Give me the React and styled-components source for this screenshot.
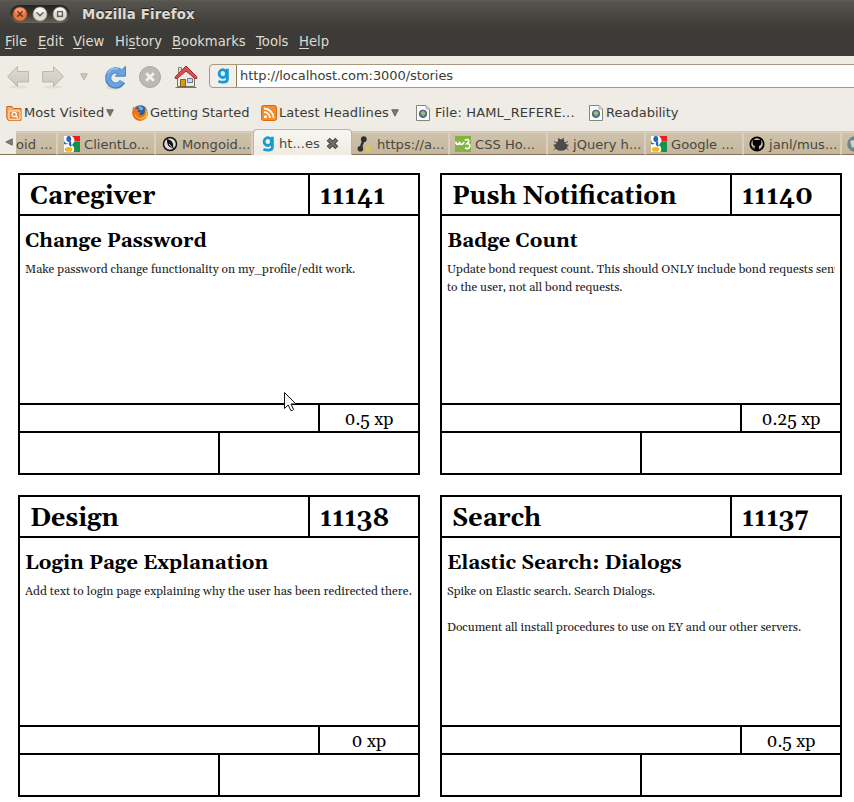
import React from 'react';
import styled, { createGlobalStyle } from 'styled-components';

const GlobalStyle = createGlobalStyle`
  * { box-sizing: border-box; }
  body { margin: 0; background: #fff; overflow: hidden; }
`;

const Window = styled.div`
  width: 854px;
  height: 802px;
  overflow: hidden;
  font: 13.3px/16px "DejaVu Sans", sans-serif;
  color: #3c3b37;
`;

const DarkChrome = styled.header`
  height: 56px;
  background: linear-gradient(#5f5b4e 0, #55544e 2px, #3f3e39 24px, #3c3b37 30px);
  color: #dfdbd2;
`;

const TitleBar = styled.div`
  height: 28px;
  display: flex;
  align-items: center;
  padding-left: 10px;
`;

const WindowButtons = styled.div`
  width: 60px;
  height: 18px;
  margin-right: 12px;
  display: flex;
  align-items: center;
  justify-content: space-between;
  padding: 0 2px;
  border-radius: 9px;
  background: linear-gradient(#24231f, #34332e 45%, #66645c);
`;

const WindowTitle = styled.h1`
  margin: 0;
  padding-top: 2px;
  font-size: 13.3px;
  line-height: 16px;
  letter-spacing: 0.18px;
  text-shadow: 0 -1px 0 #22211e;
`;

const MenuBar = styled.nav`
  display: flex;
  padding: 6px 0 0 5px;
  font-size: 13.2px;
`;

const MenuItem = styled.span`
  width: ${(p) => p.$width}px;
  white-space: nowrap;
`;

const Key = styled.span`
  text-decoration: underline;
  text-underline-offset: 2px;
  text-decoration-thickness: 1px;
`;

const NavBar = styled.div`
  height: 41px;
  background: #efebe5;
  display: flex;
  align-items: center;
  padding-left: 6px;
`;

const NavIcon = styled.span`
  width: ${(p) => p.$width}px;
  height: 26px;
  display: flex;
  align-items: center;
  flex: none;
`;

const AddressBar = styled.div`
  flex: 1;
  height: 24px;
  display: flex;
  align-items: center;
  margin: -1px -6px 0 0;
  padding-left: 7px;
  border: 1px solid #a89880;
  border-radius: 4px;
  background: linear-gradient(90deg, #f3f0eb 27px, #fff 27px);
  font-size: 13px;
  letter-spacing: -0.075px;
  color: #3c3b37;
`;

const SiteIcon = styled.span`
  width: 20px;
  height: 22px;
  margin-right: 3px;
  border-right: 1px solid #8d7c62;
  display: flex;
  align-items: center;
`;

const BookmarksBar = styled.div`
  height: 32px;
  background: #efebe5;
  display: flex;
  align-items: center;
`;

const Bookmark = styled.span`
  width: ${(p) => p.$width}px;
  display: flex;
  align-items: center;
  gap: ${(p) => p.$gap}px;
  white-space: nowrap;
  font-size: 13px;
  letter-spacing: ${(p) => p.$tracking || 0}px;

  &:first-child { margin-left: 6px; }
`;

const TabBar = styled.div`
  height: 26px;
  display: flex;
  align-items: flex-end;
  background: linear-gradient(#efebe5 2px, #d5c9b5 2px, #c6b89e 25px, #85745b 25px);
`;

const ScrollButton = styled.span`
  width: 16px;
  height: 25px;
  flex: none;
  margin-bottom: 1px;
  padding: 9px 0 0 5px;
  display: flex;
  background: #efebe5;
`;

const Tab = styled.div`
  width: ${(p) => p.$width}px;
  height: ${(p) => (p.$active ? 26 : 23)}px;
  flex: none;
  display: flex;
  align-items: center;
  gap: 4px;
  padding: ${(p) => (p.$active ? '2px 0 0 8px' : `1px 0 0 ${p.$inset ?? 6}px`)};
  overflow: hidden;
  white-space: nowrap;
  font-size: 13.1px;
  color: #494740;
  border: solid ${(p) => (p.$active ? '#c3b59d' : '#dacfbe')};
  border-width: ${(p) => (p.$active ? '1px 1px 0' : '1px 2px 0 0')};
  border-radius: ${(p) => (p.$active ? '4px 4px 0 0' : '0')};
  background: ${(p) => (p.$active ? 'linear-gradient(#f8f6f2, #efebe2)' : 'linear-gradient(#cfc2ac, #c5b79c)')};
  ${(p) => !p.$active && 'border-bottom: 1px solid #85745b;'}
`;

const TabLabel = styled.span`
  padding-top: ${(p) => (p.$active ? 0 : 1)}px;
  margin-right: ${(p) => (p.$active ? 2 : 0)}px;
`;

const Board = styled.main`
  display: grid;
  grid-template-columns: 402px 402px;
  gap: 20px;
  padding: 18px 0 0 18px;
  font-family: Georgia, Gelasio, "Liberation Serif", serif;
  color: #000;
`;

const Card = styled.article`
  height: 302px;
  display: grid;
  grid-template: 39px 187px 26px 40px / minmax(0, 1fr);
  gap: 2px;
  border: 2px solid #000;
  background: #000;
`;

const CardRow = styled.div`
  display: grid;
  grid-template: minmax(0, 1fr) / ${(p) => p.$first}px minmax(0, 1fr);
  gap: 2px;
`;

const HeadCell = styled.h2`
  margin: 0;
  padding: 1px 10px 0;
  overflow: hidden;
  background: #fff;
  font-size: 25.1px;
  line-height: 42px;
  white-space: nowrap;
`;

const CardBody = styled.div`
  padding: 11px 5px 0;
  overflow: hidden;
  background: #fff;
`;

const StoryTitle = styled.h3`
  margin: 0 0 6px;
  font-size: 20px;
  line-height: 28px;
`;

const StoryLine = styled.p`
  margin: 0;
  height: 18px;
  overflow: hidden;
  white-space: nowrap;
  font-size: 12px;
  line-height: 18px;
  letter-spacing: ${(p) => p.$tracking || 0}px;
  color: #222;
`;

const Cell = styled.div`
  padding-top: 1px;
  overflow: hidden;
  background: #fff;
  text-align: center;
  font-size: 18px;
  line-height: 28px;
`;

const Pointer = styled.svg`
  position: absolute;
  left: 283px;
  top: 391px;
`;

function WinButton({ kind }) {
  const orange = kind === 'close';
  return (
    <svg width="16" height="16" viewBox="0 0 16 16">
      <circle cx="8" cy="8" r="7" fill={orange ? '#ed7442' : '#dedbd3'} stroke={orange ? '#a84722' : '#96938b'} strokeWidth=".6" />
      <ellipse cx="8" cy="5" rx="5" ry="3.2" fill={orange ? '#f79a72' : '#f8f7f4'} />
      <g fill="none" stroke={orange ? '#6b3420' : '#64625b'} strokeWidth="1.5">
        {kind === 'close' && <path d="M5.3 5.3l5.4 5.4M10.7 5.3l-5.4 5.4" />}
        {kind === 'min' && <path d="M4.5 6.3L8 9.6l3.5-3.3" />}
        {kind === 'max' && <rect x="5.6" y="5.6" width="4.8" height="4.8" />}
      </g>
    </svg>
  );
}

const Arrow = ({ flip }) => (
  <svg width="24" height="26" viewBox="0 0 24 26">
    <defs>
      <linearGradient id="arrow" x2="0" y2="1"><stop stopColor="#e0dcd4" /><stop offset="1" stopColor="#cbc6bd" /></linearGradient>
    </defs>
    <ellipse cx="12" cy="23" rx="9" ry="1.5" fill="#e2ddd5" />
    <path d="M1.5 12.5L11.5 2.5V7.5H22.5V18H11.5V22.5Z" fill="url(#arrow)" stroke="#bdb8ae" transform={flip ? 'translate(24 0) scale(-1 1)' : undefined} />
  </svg>
);

const Triangle = ({ light }) => (
  <svg width="8" height="8" viewBox="0 0 8 8"><path d="M.7.7H7.3L4 7.2Z" fill={light ? '#cec5b4' : '#77756f'} stroke={light ? '#b7ae9b' : '#5c5a55'} strokeWidth=".8" /></svg>
);

const Reload = () => (
  <svg width="24" height="26" viewBox="0 0 24 26">
    <ellipse cx="11" cy="23.5" rx="8" ry="2" fill="#ddd9d2" />
    <path d="M19.4 17.6A7.6 7.6 0 1 1 16.9 7.6" fill="none" stroke="#4681c0" strokeWidth="6.2" />
    <path d="M22.4 2.4V12.2H12.4L15.6 8.8L18 6.6Z" fill="#6aa5df" stroke="#4681c0" />
    <path d="M19 17.4A7.4 7.4 0 1 1 17.4 8" fill="none" stroke="#69a3dd" strokeWidth="4.4" />
    <path d="M4.4 9.5Q8.5 2.8 15 5" fill="none" stroke="#93c0ea" strokeWidth="1.4" />
  </svg>
);

const Stop = () => (
  <svg width="24" height="26" viewBox="0 0 24 26">
    <circle cx="12" cy="13" r="10.5" fill="#bcb9b4" stroke="#aaa7a1" />
    <path d="M8.2 9.2l7.6 7.6M15.8 9.2l-7.6 7.6" stroke="#f4f1ec" strokeWidth="2.8" />
  </svg>
);

const Home = () => (
  <svg width="24" height="26" viewBox="0 0 24 26">
    <path d="M4.5 3.5H7.5V9H4.5Z" fill="#d8d3c9" stroke="#8a857b" />
    <path d="M3.5 12L12 5L20.5 12V22.5H3.5Z" fill="#eee9df" stroke="#77736b" />
    <path d="M1.5 23.5H22.5" stroke="#77736b" />
    <path d="M1.2 12.8L12 2L22.8 12.8V14.5H20.8L12 7L3.2 14.5H1.2Z" fill="#dc4e52" stroke="#a92830" />
    <path d="M6.5 15.5H11.5V22.5H6.5Z" fill="#d59b20" stroke="#86601e" />
    <path d="M13.5 14.5H18.5V18.5H13.5Z" fill="#c8daed" stroke="#647b93" />
  </svg>
);

const GIcon = () => (
  <svg width="13" height="16" viewBox="0 0 13 16" fill="none" stroke="#159bd5" strokeWidth="2.8">
    <ellipse cx="5.8" cy="5.6" rx="3.7" ry="3.9" />
    <path d="M10.4.8V11Q10.4 14.2 6 14.2Q3.5 14.2 1.4 13.2" />
  </svg>
);

const FolderIcon = () => (
  <svg width="16" height="16" viewBox="0 0 16 16">
    <path d="M.8 1.5H6L7.5 3.5H15V15.2H2.2L.8 13Z" fill="#f3ae70" stroke="#cc600f" />
    <path d="M3 6H14V14.3H3Z" fill="#e98b3d" stroke="#ffe8d0" />
    <circle cx="8.2" cy="9.5" r="2.2" fill="none" stroke="#fff" strokeWidth="1.2" />
    <path d="M10 11.2L12 13" stroke="#fff" strokeWidth="1.4" />
  </svg>
);

const FirefoxIcon = () => (
  <svg width="16" height="16" viewBox="0 0 16 16">
    <circle cx="8" cy="8" r="7.7" fill="#d96014" />
    <circle cx="9" cy="6" r="5.6" fill="#2a5f9f" />
    <path d="M6 1.5Q9 .5 11.5 3L10 5.5L8 5Z" fill="#78b0dc" />
    <path d="M1 1.8L3.6 3.8L6.8 4.5L5.2 6.8L8.6 7.6Q6.5 8.6 8 10.2Q11 11 12.6 8L13 2.6Q17 7.2 14.8 11.5Q11.5 16.2 6.4 15.4Q.2 13.2.4 7Z" fill="#ee7418" />
    <path d="M3 8Q4 13 8.5 13Q13 12.5 13.8 8Q14 5 13 2.6Q17 7.2 14.5 11.7Q8.5 17.5 2.5 12.5Z" fill="#fcb52c" />
    <path d="M2 10Q5 14.8 9 14Q5 16 2.5 12.6Z" fill="#e6500f" />
  </svg>
);

const FeedIcon = () => (
  <svg width="16" height="16" viewBox="0 0 16 16">
    <rect x=".5" y=".5" width="15" height="15" rx="2" fill="#f68b27" stroke="#d76b11" />
    <g fill="none" stroke="#fff" strokeWidth="1.8"><path d="M3 7.1A6 6 0 0 1 9 13.1M3 3.5A9.6 9.6 0 0 1 12.6 13.1" /></g>
    <circle cx="4.4" cy="11.7" r="1.5" fill="#fff" />
  </svg>
);

const PageIcon = () => (
  <svg width="14" height="16" viewBox="0 0 14 16">
    <path d="M.5.5H10L13.5 4V15.5H.5Z" fill="#fbfbfa" stroke="#85857f" />
    <path d="M10 .5V4H13.5" fill="#ddd" stroke="#aaa" />
    <circle cx="7" cy="8.8" r="3.7" fill="#4e7eae" stroke="#45596e" />
    <path d="M4.6 7.2L7.4 5.8L9.4 8L7.8 11L5.6 9.6Z" fill="#a9bd66" />
  </svg>
);

const GoogleIcon = () => (
  <svg width="16" height="16" viewBox="0 0 16 16">
    <path fill="#fff" d="M0 0H16V16H0Z" />
    <path fill="#eb1e24" d="M8 0H16V5.5H10.5Q11 2.5 8 0Z" />
    <path fill="#12924c" d="M10.5 5.5H16V16H9.5Q11.5 12 8 9Z" />
    <path fill="#2564bd" d="M0 4V8Q2.2 9 4 7.6Q0 7 0 4Z" />
    <ellipse cx="4.8" cy="3" rx="2.4" ry="3" fill="#2564bd" />
    <path d="M7 6Q4.5 7.5 7.3 10" fill="none" stroke="#2564bd" strokeWidth="2.2" />
    <ellipse cx="4.6" cy="13.4" rx="3.8" ry="2.3" fill="#f5b51d" />
  </svg>
);

const LeafIcon = () => (
  <svg width="16" height="16" viewBox="0 0 16 16">
    <circle cx="8" cy="8" r="6.5" fill="#dcdcdc" stroke="#111" strokeWidth="1.5" />
    <path d="M5 3Q12 4.5 11.2 11L12.5 13.5L9.6 11.8Q4.4 10.5 5 3Z" fill="#111" />
    <path d="M7.2 8L10 11.5" stroke="#eee" strokeWidth=".8" />
  </svg>
);

const DotsIcon = () => (
  <svg width="16" height="16" viewBox="0 0 16 16">
    <path d="M6.5 4L3.5 12.5" stroke="#302f31" strokeWidth="2.4" />
    <circle cx="6.8" cy="3.2" r="2.9" fill="#302f31" /><circle cx="3.4" cy="12.8" r="2.8" fill="#302f31" /><circle cx="11" cy="12.8" r="2.9" fill="#e0c64f" />
  </svg>
);

const W3Icon = () => (
  <svg width="16" height="16" viewBox="0 0 16 16">
    <path fill="#83b443" d="M0 0H16V16H0Z" />
    <path d="M.8 5.6Q.9 8.4 2.8 8.4Q4.4 8.4 4.4 5.6Q4.6 8.4 6.4 8.4Q8.4 8.4 9 5.9M9.8 4.6Q11.2 3 13 3.7Q15 5.2 12 7.6Q15.4 7.6 14.8 10.8Q13.3 13.6 10 12" fill="none" stroke="#fff" strokeWidth="1.6" />
  </svg>
);

const InsectIcon = () => (
  <svg width="16" height="16" viewBox="0 0 16 16">
    <path d="M4.5 6L5.6 1.5L7 3.2H9L10.4 1.5L11.5 6L15 10L13 13.2Q8 16.4 3 13.2L1 10Z" fill="#4c4b49" />
    <path d="M5 7L1 5.5M11 7L15 5.5M3 12L.6 14M13 12L15.4 14M3 9H.4M13 9H15.6" stroke="#4c4b49" />
    <path d="M2.5 4.5L4 5.8M13.5 4.5L12 5.8M2.2 13L3.5 14.4M13.8 13L12.5 14.4" stroke="#eee" strokeWidth=".7" />
  </svg>
);

const CatIcon = () => (
  <svg width="16" height="16" viewBox="0 0 16 16">
    <circle cx="8" cy="8" r="6.7" fill="#c9bda8" stroke="#000" strokeWidth="1.8" />
    <path d="M4 3L6 4H10L12 3L12.4 7Q12 10 9.9 10.3L10 14H6V10.3Q3.8 10 3.6 7ZM3 10L6 12V13.2Z" />
  </svg>
);

const GlobeIcon = () => (
  <svg width="16" height="16" viewBox="0 0 16 16">
    <circle cx="8" cy="8" r="7" fill="#5b8e9d" stroke="#7e8178" strokeWidth="1.5" /><path d="M3 5L7 4L8 10L5 12Z" fill="#c5d9cb" />
  </svg>
);

const CloseIcon = () => (
  <svg width="13" height="13" viewBox="0 0 13 13">
    <path d="M2.2 2.2L10.8 10.8M10.8 2.2L2.2 10.8" stroke="#3f3e3b" strokeWidth="4.4" />
    <path d="M2.5 2.5L10.5 10.5M10.5 2.5L2.5 10.5" stroke="#6f6d68" strokeWidth="2.8" />
  </svg>
);

const menus = [
  ['', 'F', 'ile', 33], ['', 'E', 'dit', 35], ['', 'V', 'iew', 42], ['Hi', 's', 'tory', 57],
  ['', 'B', 'ookmarks', 84], ['', 'T', 'ools', 43], ['', 'H', 'elp', 40],
];

const tabs = [
  { text: 'oid ...', width: 42, inset: 0 },
  { text: 'ClientLo...', width: 98, Icon: GoogleIcon },
  { text: 'Mongoid...', width: 97, Icon: LeafIcon },
  { text: 'ht...es', width: 99, Icon: GIcon, active: true },
  { text: 'https://a...', width: 98, Icon: DotsIcon, inset: 5 },
  { text: 'CSS Ho...', width: 98, Icon: W3Icon, inset: 5 },
  { text: 'jQuery h...', width: 98, Icon: InsectIcon, inset: 5 },
  { text: 'Google ...', width: 98, Icon: GoogleIcon, inset: 5 },
  { text: 'janl/mus...', width: 98, Icon: CatIcon, inset: 5 },
  { text: '', width: 98, Icon: GlobeIcon, inset: 5 },
];

const stories = [
  { area: 'Caregiver', id: '11141', title: 'Change Password', xp: '0.5 xp', lines: [['Make password change functionality on my_profile/edit work.']] },
  { area: 'Push Notification', id: '11140', title: 'Badge Count', xp: '0.25 xp', lines: [['Update bond request count. This should ONLY include bond requests sent', -0.02], ['to the user, not all bond requests.', -0.03]] },
  { area: 'Design', id: '11138', title: 'Login Page Explanation', xp: '0 xp', lines: [['Add text to login page explaining why the user has been redirected there.', 0.035]] },
  { area: 'Search', id: '11137', title: 'Elastic Search: Dialogs', xp: '0.5 xp', lines: [['Spike on Elastic search. Search Dialogs.', -0.03], [''], ['Document all install procedures to use on EY and our other servers.', -0.045]] },
];

function StoryCard({ story }) {
  return (
    <Card>
      <CardRow $first={288}>
        <HeadCell>{story.area}</HeadCell>
        <HeadCell>{story.id}</HeadCell>
      </CardRow>
      <CardBody>
        <StoryTitle>{story.title}</StoryTitle>
        {story.lines.map(([line, tracking], i) => <StoryLine key={i} $tracking={tracking}>{line}</StoryLine>)}
      </CardBody>
      <CardRow $first={298}>
        <Cell />
        <Cell>{story.xp}</Cell>
      </CardRow>
      <CardRow $first={198}>
        <Cell />
        <Cell />
      </CardRow>
    </Card>
  );
}

export default function App() {
  return (
    <Window>
      <GlobalStyle />
      <DarkChrome>
        <TitleBar>
          <WindowButtons><WinButton kind="close" /><WinButton kind="min" /><WinButton kind="max" /></WindowButtons>
          <WindowTitle>Mozilla Firefox</WindowTitle>
        </TitleBar>
        <MenuBar>
          {menus.map(([before, key, after, width]) => (
            <MenuItem key={before + key + after} $width={width}>{before}<Key>{key}</Key>{after}</MenuItem>
          ))}
        </MenuBar>
      </DarkChrome>
      <NavBar>
        <NavIcon $width={35}><Arrow /></NavIcon>
        <NavIcon $width={39}><Arrow flip /></NavIcon>
        <NavIcon $width={23}><Triangle light /></NavIcon>
        <NavIcon $width={35}><Reload /></NavIcon>
        <NavIcon $width={36}><Stop /></NavIcon>
        <NavIcon $width={35}><Home /></NavIcon>
        <AddressBar><SiteIcon><GIcon /></SiteIcon>http://localhost.com:3000/stories</AddressBar>
      </NavBar>
      <BookmarksBar>
        <Bookmark $width={126} $gap={2} $tracking={0.1}><FolderIcon />Most Visited<Triangle /></Bookmark>
        <Bookmark $width={129} $gap={2} $tracking={-0.08}><FirefoxIcon />Getting Started</Bookmark>
        <Bookmark $width={155} $gap={2} $tracking={0.08}><FeedIcon />Latest Headlines<Triangle /></Bookmark>
        <Bookmark $width={173} $gap={5} $tracking={0.16}><PageIcon />File: HAML_REFERE...</Bookmark>
        <Bookmark $width={120} $gap={3}><PageIcon />Readability</Bookmark>
      </BookmarksBar>
      <TabBar>
        <ScrollButton><svg width="8" height="9" viewBox="0 0 8 9"><path d="M7.3.8V7.2L.8 4Z" fill="#817e77" stroke="#5c5a55" strokeWidth=".8" /></svg></ScrollButton>
        {tabs.map(({ text, width, inset, Icon, active }, i) => (
          <Tab key={i} $width={width} $inset={inset} $active={active}>
            {Icon && <Icon />}<TabLabel $active={active}>{text}</TabLabel>{active && <CloseIcon />}
          </Tab>
        ))}
      </TabBar>
      <Board>{stories.map((story) => <StoryCard key={story.id} story={story} />)}</Board>
      <Pointer width="15" height="22" viewBox="0 0 15 22">
        <path d="M1.5 1.5V17.5L5.2 14L7.8 19.6Q9.6 20 10.6 18.4L8 13H13Z" fill="#f7f7f7" stroke="#111" />
      </Pointer>
    </Window>
  );
}
